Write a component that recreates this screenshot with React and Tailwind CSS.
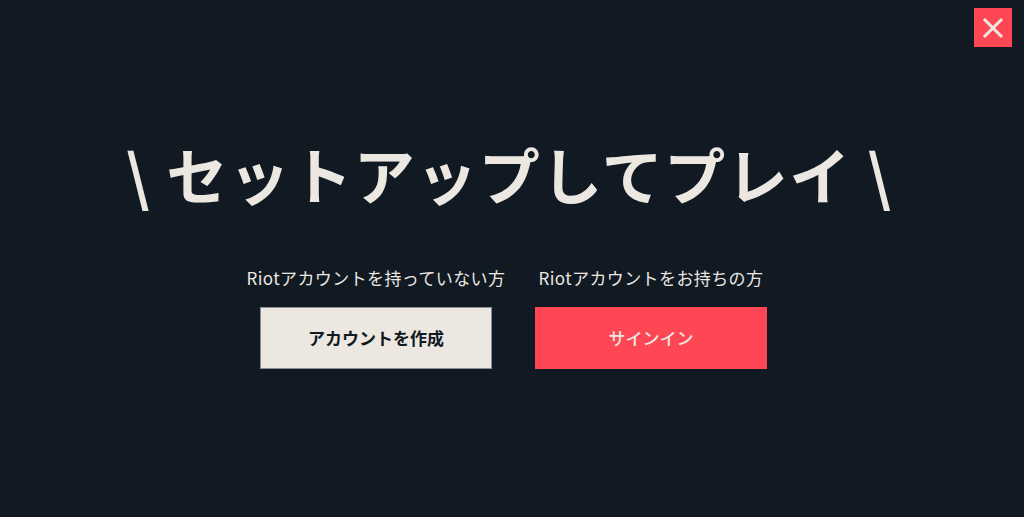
export default function App() {
  return (
    <div
      className="relative w-[1024px] h-[517px] bg-[#111923] overflow-hidden flex flex-col items-center"
      style={{ fontFamily: '"Noto Sans CJK JP", "Noto Sans", sans-serif' }}
    >
      {/* CLOSE */}
      <button className="absolute top-[8px] right-[12px] w-[38px] h-[39px] bg-[#ff4655] flex items-center justify-center">
        <svg width="22" height="22" viewBox="0 0 22 22">
          <path d="M3 3 L19 19 M19 3 L3 19" stroke="#ece8e1" strokeWidth="3" strokeLinecap="square" />
        </svg>
      </button>

      {/* TITLE */}
      <h1 className="mt-[134px] ml-[-6px] text-[61px] leading-[80px] font-bold tracking-[1.5px] text-[#ece8e1] whitespace-nowrap">
        \ セットアップしてプレイ \
      </h1>

      {/* OPTIONS */}
      <div className="mt-[52px] ml-[3px] flex gap-[43px]">
        <div className="flex flex-col items-center w-[232px]">
          <p className="text-[17px] leading-[24px] tracking-[0.4px] text-[#ece8e1] whitespace-nowrap">
            Riotアカウントを持っていない方
          </p>
          <button className="mt-[17px] w-[232px] h-[62px] bg-[#ece8e1] border border-[#8b8f94] text-[#111923] text-[17px] font-bold">
            アカウントを作成
          </button>
        </div>

        <div className="flex flex-col items-center w-[232px]">
          <p className="text-[17px] leading-[24px] tracking-[0.4px] text-[#ece8e1] whitespace-nowrap">
            Riotアカウントをお持ちの方
          </p>
          <button className="mt-[17px] w-[232px] h-[62px] bg-[#ff4655] text-[#ece8e1] text-[17px] font-medium">
            サインイン
          </button>
        </div>
      </div>
    </div>
  );
}
